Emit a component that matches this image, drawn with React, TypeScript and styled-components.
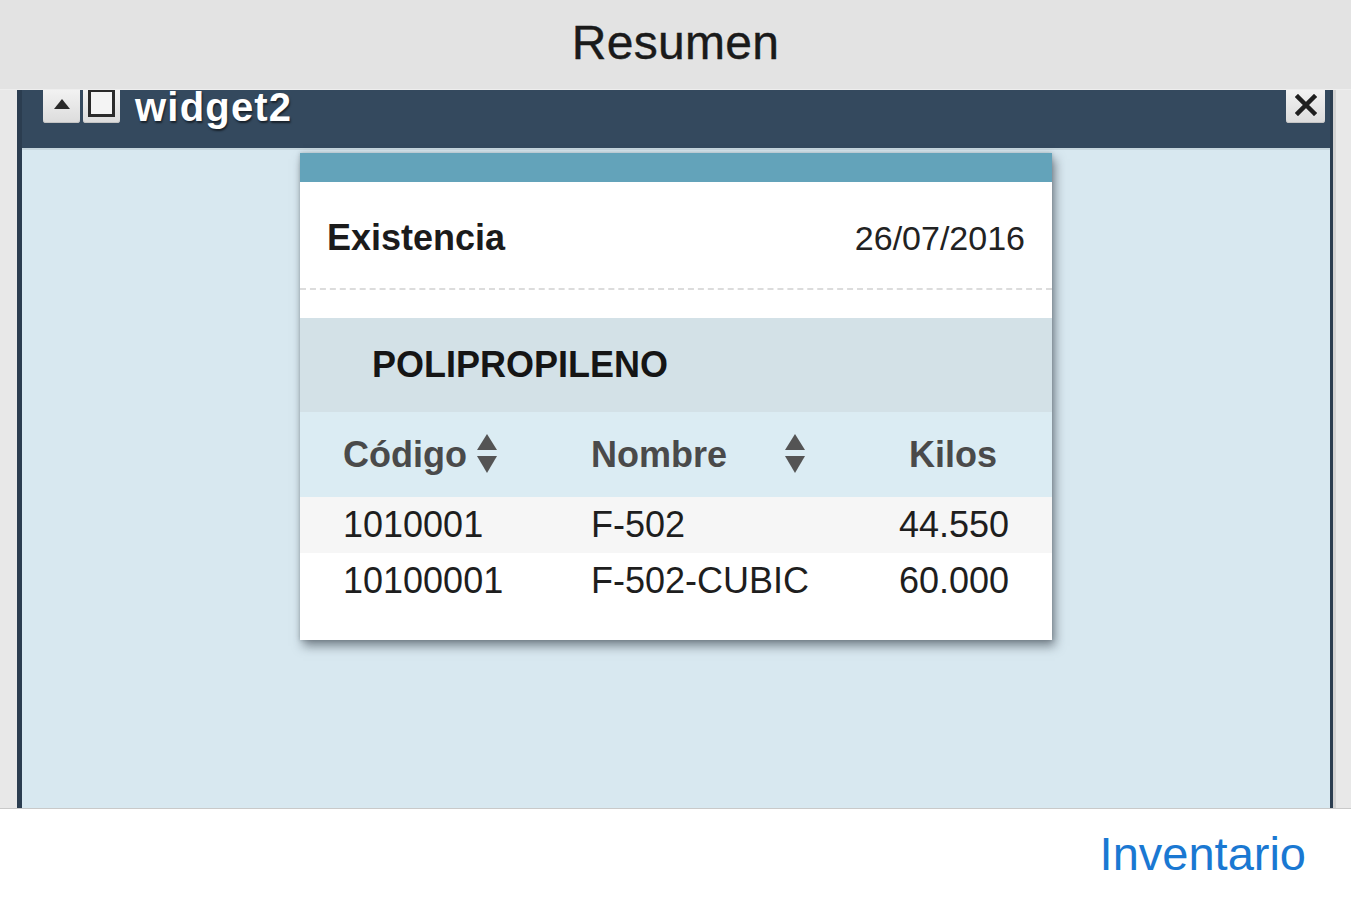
import React from "react";
import styled, { createGlobalStyle } from "styled-components";

const Global = createGlobalStyle`
  html, body { margin: 0; padding: 0; }
  body { font-family: "Liberation Sans", Arial, sans-serif; background: #ffffff; }
`;

const Page = styled.div`
  width: 1351px;
  height: 900px;
  display: flex;
  flex-direction: column;
  overflow: hidden;
`;

const TopBar = styled.header`
  height: 89px;
  flex: 0 0 89px;
  background: #e3e3e3;
  border-bottom: 1px solid #eeeeee;
  display: flex;
  align-items: center;
  justify-content: center;
`;

const Title = styled.h1`
  margin: 0;
  margin-top: -4px;
  font-family: "Liberation Sans", Arial, sans-serif;
  font-weight: 400;
  font-size: 48px;
  color: #1a1a1a;
  letter-spacing: 0.3px;
  -webkit-text-stroke: 0.4px #1a1a1a;
`;

const Middle = styled.div`
  flex: 1;
  display: flex;
  min-height: 0;
`;

const Gutter = styled.div<{ $w: number }>`
  flex: 0 0 ${(p) => p.$w}px;
  background: #e8e8e8;
  border-left: ${(p) => (p.$w > 17 ? "3px solid #d2d2d2" : "none")};
  box-sizing: border-box;
`;

const WidgetFrame = styled.section`
  flex: 1;
  display: flex;
  flex-direction: column;
  background: #34495e;
  border-left: 5px solid #2b3d50;
  border-right: 3px solid #2b3d50;
  min-width: 0;
`;

const WidgetHeader = styled.div`
  height: 58px;
  flex: 0 0 58px;
  display: flex;
  align-items: flex-start;
  padding: 0 5px 0 21px;
  border-bottom: 2px solid #c6d6de;
  box-sizing: content-box;
`;

const HeadButton = styled.button`
  width: 37px;
  height: 33px;
  margin: 0 3px 0 0;
  padding: 0;
  border: none;
  border-radius: 0 0 3px 3px;
  background: linear-gradient(#f2f2f2, #dcdcdc);
  box-shadow: inset 0 -1px 0 #c4c4c4;
  display: flex;
  align-items: center;
  justify-content: center;
  color: #222;
`;

const SquareGlyph = styled.span`
  width: 21px;
  height: 22px;
  border: 3px solid #2a2a2a;
  border-top-width: 2px;
  background: #f4f4f4;
  margin-top: -6px;
  box-sizing: content-box;
  display: block;
`;

const WidgetTitle = styled.span`
  margin-left: 12px;
  margin-top: -3px;
  font-family: "Liberation Sans", Arial, sans-serif;
  font-weight: 700;
  font-size: 40px;
  letter-spacing: 1.2px;
  color: #ffffff;
  text-shadow: 1px 2px 2px rgba(0, 0, 0, 0.55);
  line-height: 40px;
`;

const Spacer = styled.div`
  flex: 1;
`;

const CloseButton = styled(HeadButton)`
  width: 39px;
  margin: 0;
`;

const WidgetBody = styled.div`
  flex: 1;
  background: #d8e8f0;
  display: flex;
  justify-content: flex-start;
  align-items: flex-start;
  padding: 3px 0 0 278px;
`;

const Card = styled.article`
  width: 752px;
  background: #ffffff;
  box-shadow: 3px 6px 10px rgba(40, 50, 60, 0.55), 0 0 4px rgba(40, 50, 60, 0.25);
  display: flex;
  flex-direction: column;
  padding-bottom: 31px;
`;

const Stripe = styled.div`
  height: 29px;
  background: #63a3ba;
`;

const CardHead = styled.div`
  height: 108px;
  display: flex;
  align-items: center;
  justify-content: space-between;
  padding: 6px 27px 0 27px;
  border-bottom: 2px dashed #dcdcdc;
  box-sizing: border-box;
  margin-bottom: 28px;
`;

const CardTitle = styled.span`
  font-weight: 700;
  font-size: 36px;
  color: #1b1b1b;
`;

const CardDate = styled.span`
  font-size: 34px;
  color: #222;
`;

const GroupBand = styled.div`
  height: 94px;
  background: #d3e1e7;
  display: flex;
  align-items: center;
  padding-left: 72px;
  font-weight: 700;
  font-size: 36px;
  color: #151515;
`;

const Grid = styled.div<{ $bg: string; $h: number }>`
  height: ${(p) => p.$h}px;
  background: ${(p) => p.$bg};
  display: grid;
  grid-template-columns: 248px 248px 1fr;
  align-items: center;
  padding: 0 43px 0 43px;
  font-size: 36px;
`;

const HeadCell = styled.div<{ $right?: boolean }>`
  display: flex;
  align-items: center;
  justify-content: ${(p) => (p.$right ? "flex-end" : "flex-start")};
  font-weight: 700;
  color: #4a4a4a;
  padding-right: ${(p) => (p.$right ? "12px" : "0")};
`;

const SortWrap = styled.span<{ $gap: number }>`
  margin-left: ${(p) => p.$gap}px;
  display: inline-flex;
  margin-top: -2px;
`;

const Cell = styled.div<{ $right?: boolean }>`
  color: #1e1e1e;
  text-align: ${(p) => (p.$right ? "right" : "left")};
`;

const BottomBar = styled.footer`
  height: 91px;
  flex: 0 0 91px;
  border-top: 1px solid #c9c9c9;
  background: #ffffff;
  display: flex;
  align-items: center;
  justify-content: flex-end;
  padding-right: 45px;
`;

const NavLink = styled.a`
  font-family: "Liberation Sans", Arial, sans-serif;
  font-size: 47px;
  color: #1a78d2;
  text-decoration: none;
  margin-top: -3px;
`;

const SortIcon = () => (
  <svg width="22" height="41" viewBox="0 0 22 41">
    <path d="M11 1 L21 17 L1 17 Z" fill="#545454" />
    <path d="M1 23 L21 23 L11 40 Z" fill="#545454" />
  </svg>
);

const UpIcon = () => (
  <svg width="16" height="10" viewBox="0 0 16 10" style={{ marginTop: "-6px" }}>
    <path d="M8 0 L16 10 L0 10 Z" fill="#2a2a2a" />
  </svg>
);

const CloseIcon = () => (
  <svg width="22" height="22" viewBox="0 0 22 22" style={{ marginTop: "-4px" }}>
    <path d="M3 3 L19 19 M19 3 L3 19" stroke="#1f1f1f" strokeWidth="4.5" strokeLinecap="square" />
  </svg>
);

const rows = [
  { code: "1010001", name: "F-502", kilos: "44.550", bg: "#f6f6f6" },
  { code: "10100001", name: "F-502-CUBIC", kilos: "60.000", bg: "#ffffff" },
];

export default function App() {
  return (
    <Page>
      <Global />
      <TopBar>
        <Title>Resumen</Title>
      </TopBar>
      <Middle>
        <Gutter $w={17} />
        <WidgetFrame>
          <WidgetHeader>
            <HeadButton aria-label="collapse">
              <UpIcon />
            </HeadButton>
            <HeadButton aria-label="maximize">
              <SquareGlyph />
            </HeadButton>
            <WidgetTitle>widget2</WidgetTitle>
            <Spacer />
            <CloseButton aria-label="close">
              <CloseIcon />
            </CloseButton>
          </WidgetHeader>
          <WidgetBody>
            <Card>
              <Stripe />
              <CardHead>
                <CardTitle>Existencia</CardTitle>
                <CardDate>26/07/2016</CardDate>
              </CardHead>
              <GroupBand>POLIPROPILENO</GroupBand>
              <Grid $bg="#dbecf3" $h={85}>
                <HeadCell>
                  Código
                  <SortWrap $gap={9}>
                    <SortIcon />
                  </SortWrap>
                </HeadCell>
                <HeadCell>
                  Nombre
                  <SortWrap $gap={57}>
                    <SortIcon />
                  </SortWrap>
                </HeadCell>
                <HeadCell $right>Kilos</HeadCell>
              </Grid>
              {rows.map((r) => (
                <Grid key={r.code} $bg={r.bg} $h={56}>
                  <Cell>{r.code}</Cell>
                  <Cell>{r.name}</Cell>
                  <Cell $right>{r.kilos}</Cell>
                </Grid>
              ))}
            </Card>
          </WidgetBody>
        </WidgetFrame>
        <Gutter $w={18} />
      </Middle>
      <BottomBar>
        <NavLink href="#">Inventario</NavLink>
      </BottomBar>
    </Page>
  );
}
